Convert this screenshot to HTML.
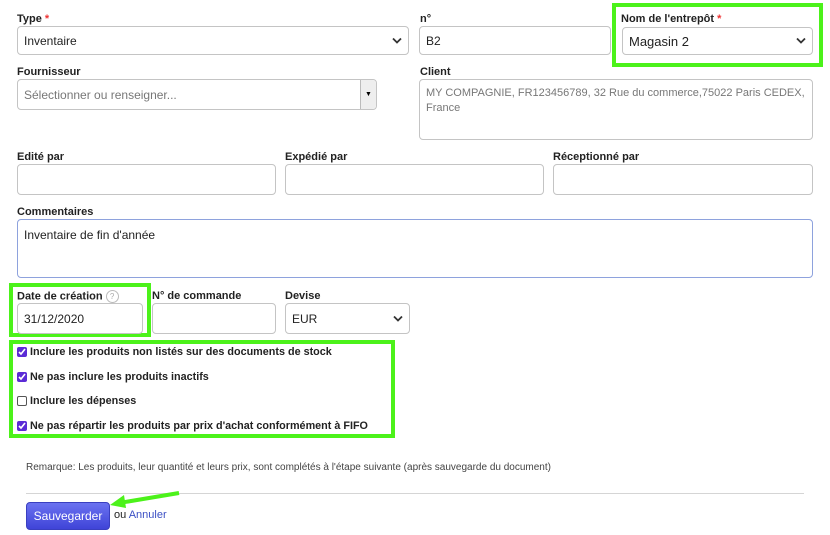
<!DOCTYPE html>
<html><head><meta charset="utf-8"><style>
body{margin:0;width:830px;height:535px;background:#fff;font-family:"Liberation Sans",Arial,sans-serif;position:relative;overflow:hidden}
.a{position:absolute}
.l{position:absolute;font-size:11px;font-weight:bold;color:#222}
.l .s{color:#e33}
.f{position:absolute;box-sizing:border-box;border:1px solid #c4c4c4;border-radius:4px;background:#fff;font-size:12px;color:#222;padding:0 6px;display:flex;align-items:center}
.chev{position:absolute;right:6px;top:50%;margin-top:-4px}
.g{position:absolute;box-sizing:border-box;border:4px solid #4cf21a}
.cb{position:absolute;left:17px;font-size:10.8px;font-weight:bold;color:#222;display:flex;align-items:center}
.box{width:10px;height:10px;border-radius:2px;background:#5b2bd6;margin-right:3px;display:inline-flex;align-items:center;justify-content:center}
.box.e{background:#fff;border:1px solid #555;box-sizing:border-box}
</style></head><body>
<svg width="0" height="0" style="position:absolute"><defs><symbol id="c" viewBox="0 0 10 6"><path d="M1 1l4 4 4-4" fill="none" stroke="#333" stroke-width="1.8"/></symbol></defs></svg>

<div class="l" style="left:17px;top:13px">Type <span class="s">*</span></div>
<div class="f" style="left:17px;top:26px;width:392px;height:29px">Inventaire<svg class="chev" width="10" height="7"><use href="#c"/></svg></div>
<div class="l" style="left:420px;top:13px">n°</div>
<div class="f" style="left:419px;top:26px;width:192px;height:29px">B2</div>
<div class="g" style="left:612px;top:3px;width:211px;height:64px"></div>
<div class="l" style="left:621px;top:13px">Nom de l'entrepôt <span class="s">*</span></div>
<div class="f" style="left:622px;top:27px;width:191px;height:28px;font-size:13px">Magasin 2<svg class="chev" width="10" height="7"><use href="#c"/></svg></div>

<div class="l" style="left:17px;top:66px">Fournisseur</div>
<div class="f" style="left:17px;top:79px;width:360px;height:31px;color:#777">Sélectionner ou renseigner...<div class="a" style="right:0;top:0;bottom:0;width:15px;border-left:1px solid #bbb;background:#eee;border-radius:0 4px 4px 0;font-size:7px;display:flex;align-items:center;justify-content:center;color:#000">▼</div></div>
<div class="l" style="left:420px;top:66px">Client</div>
<div class="f" style="left:419px;top:79px;width:394px;height:61px;align-items:flex-start;padding-top:6px;color:#777;font-size:11px;line-height:15px">MY COMPAGNIE, FR123456789, 32 Rue du commerce,75022 Paris CEDEX, France</div>

<div class="l" style="left:17px;top:151px">Edité par</div>
<div class="f" style="left:17px;top:164px;width:259px;height:31px"></div>
<div class="l" style="left:285px;top:151px">Expédié par</div>
<div class="f" style="left:285px;top:164px;width:259px;height:31px"></div>
<div class="l" style="left:553px;top:151px">Réceptionné par</div>
<div class="f" style="left:553px;top:164px;width:260px;height:31px"></div>

<div class="l" style="left:17px;top:206px">Commentaires</div>
<div class="f" style="left:17px;top:219px;width:796px;height:59px;align-items:flex-start;padding-top:8px;border-color:#8ea2dd">Inventaire de fin d'année</div>

<div class="g" style="left:9px;top:283px;width:142px;height:54px"></div>
<div class="l" style="left:17px;top:290px">Date de création <span style="display:inline-block;width:11px;height:11px;border:1px solid #bbb;border-radius:50%;font-size:8px;color:#aaa;text-align:center;line-height:11px;font-weight:normal;vertical-align:middle">?</span></div>
<div class="f" style="left:17px;top:303px;width:126px;height:31px">31/12/2020</div>
<div class="l" style="left:152px;top:290px">N° de commande</div>
<div class="f" style="left:152px;top:303px;width:124px;height:31px"></div>
<div class="l" style="left:285px;top:290px">Devise</div>
<div class="f" style="left:285px;top:303px;width:125px;height:31px">EUR<svg class="chev" width="10" height="7"><use href="#c"/></svg></div>

<div class="g" style="left:9px;top:340px;width:386px;height:98px"></div>
<div class="cb" style="top:346px"><span class="box"><svg width="8" height="8"><path d="M1 4l2 2 4-5" fill="none" stroke="#fff" stroke-width="1.6"/></svg></span>Inclure les produits non listés sur des documents de stock</div>
<div class="cb" style="top:371px"><span class="box"><svg width="8" height="8"><path d="M1 4l2 2 4-5" fill="none" stroke="#fff" stroke-width="1.6"/></svg></span>Ne pas inclure les produits inactifs</div>
<div class="cb" style="top:395px"><span class="box e"></span>Inclure les dépenses</div>
<div class="cb" style="top:420px"><span class="box"><svg width="8" height="8"><path d="M1 4l2 2 4-5" fill="none" stroke="#fff" stroke-width="1.6"/></svg></span>Ne pas répartir les produits par prix d'achat conformément à FIFO</div>

<div class="a" style="left:26px;top:462px;font-size:10px;color:#444">Remarque: Les produits, leur quantité et leurs prix, sont complétés à l'étape suivante (après sauvegarde du document)</div>
<div class="a" style="left:26px;top:493px;width:778px;height:1px;background:#d5d5d5"></div>
<div class="a" style="left:26px;top:502px;width:84px;height:28px;border-radius:4px;background:linear-gradient(#6b72f0,#3f44d8);color:#fff;font-size:12px;display:flex;align-items:center;justify-content:center;border:1px solid #3a3fc0;box-sizing:border-box">Sauvegarder</div>
<div class="a" style="left:114px;top:509px;font-size:11px;color:#222">ou <span style="color:#3b4fc4">Annuler</span></div>
<svg class="a" style="left:105px;top:488px" width="80" height="25"><path d="M74 5L14 15" stroke="#4cf21a" stroke-width="4"/><path d="M5 17l14-10 2 13z" fill="#4cf21a"/></svg>
</body></html>
